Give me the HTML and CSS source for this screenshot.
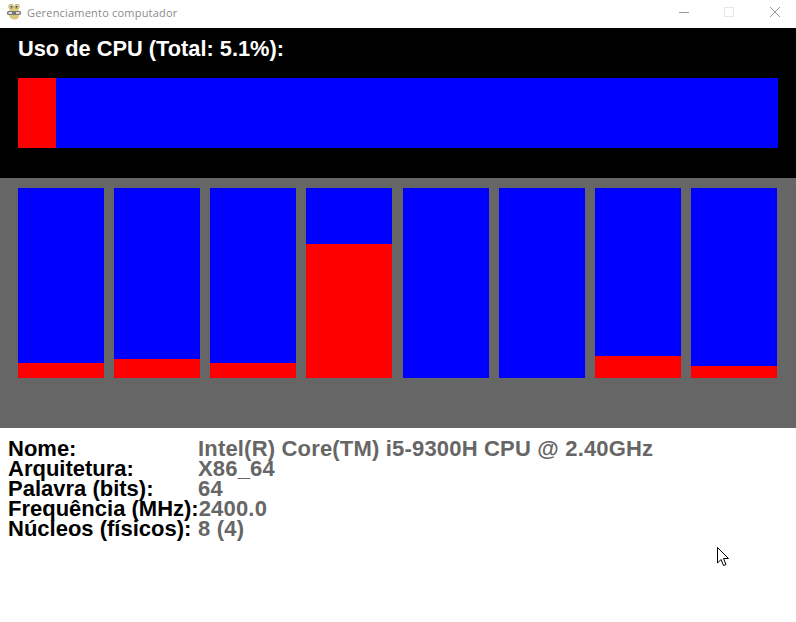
FILE: index.html
```html
<!DOCTYPE html>
<html lang="pt">
  <head>
    <meta charset="UTF-8" />
    <title>Gerenciamento computador</title>
    <link rel="stylesheet" href="styles.css">
  </head>
  <body>
    <div class="window">
      <div class="titlebar">
        <svg class="app-icon" width="14" height="16" viewBox="0 0 14 16">
          <path d="M3 8C1 10 2 15 7 15.500s6-4 4.500-7.500z" fill="#d9c77a"/>
          <path d="M3 3h8l1 5H2z" fill="#e3d07e"/>
          <circle cx="4" cy="2.500" r="2.300" fill="#efe09a" stroke="#8d8250" stroke-width=".6"/>
          <circle cx="10" cy="2.500" r="2.300" fill="#efe09a" stroke="#8d8250" stroke-width=".6"/>
          <circle cx="4.400" cy="2.800" r="1" fill="#444"/>
          <circle cx="9.600" cy="2.800" r="1" fill="#444"/>
          <rect x="0" y="7" width="14" height="4" rx="1.500" fill="#77777a"/>
          <rect x="1.500" y="8" width="3.500" height="2" fill="#dddddd"/>
          <rect x="9" y="8" width="3.500" height="2" fill="#dddddd"/>
        </svg>
        <span class="title">Gerenciamento computador</span>
        <div class="controls">
          <svg class="control-min" width="10" height="10" viewBox="0 0 10 10"><path d="M0 5.500h10" stroke="#999" fill="none"/></svg>
          <svg width="10" height="10" viewBox="0 0 10 10"><rect x=".5" y=".5" width="9" height="9" stroke="#e8e8e8" fill="none"/></svg>
          <svg width="10" height="10" viewBox="0 0 10 10"><path d="M0 0l10 10M10 0L0 10" stroke="#999" fill="none"/></svg>
        </div>
      </div>

      <!-- uso total -->
      <section class="total">
        <h1>Uso de CPU (Total: 5.1%):</h1>
        <div class="total-bar"><div class="total-used" style="width: 5%"></div></div>
      </section>

      <!-- uso por nucleo -->
      <section class="cores">
        <div class="core"><div class="core-used" style="height: 15px"></div></div>
        <div class="core"><div class="core-used" style="height: 19px"></div></div>
        <div class="core"><div class="core-used" style="height: 15px"></div></div>
        <div class="core"><div class="core-used" style="height: 134px"></div></div>
        <div class="core"><div class="core-used" style="height: 0"></div></div>
        <div class="core"><div class="core-used" style="height: 0"></div></div>
        <div class="core"><div class="core-used" style="height: 22px"></div></div>
        <div class="core"><div class="core-used" style="height: 12px"></div></div>
      </section>

      <section class="info">
        <div class="row"><span class="label">Nome:</span><span class="value">Intel(R) Core(TM) i5-9300H CPU @ 2.40GHz</span></div>
        <div class="row"><span class="label">Arquitetura:</span><span class="value">X86_64</span></div>
        <div class="row"><span class="label">Palavra (bits):</span><span class="value">64</span></div>
        <div class="row"><span class="label">Frequência (MHz):</span><span class="value">2400.0</span></div>
        <div class="row"><span class="label">Núcleos (físicos):</span><span class="value">8 (4)</span></div>
      </section>

      <svg class="cursor" width="12" height="20" viewBox="0 0 12 20">
        <path d="M.5.500v15.500l3.500-3.500 2.500 6 2.500-1-2.500-6h5z" fill="#fff" stroke="#000" stroke-width="1"/>
      </svg>
    </div>
  </body>
</html>
```

FILE: styles.css
```css
html,
body {
  margin: 0;
  padding: 0;
  background: #fff;
}
.window {
  position: relative;
  width: 796px;
  height: 622px;
  overflow: hidden;
  font-family: "Liberation Sans", Arial, sans-serif;
}
.titlebar {
  display: flex;
  align-items: center;
  height: 28px;
  padding: 0 0 4px 7px;
  box-sizing: border-box;
  background: #fff;
}
.app-icon {
  margin-right: 6px;
}
.title {
  font-family: "Open Sans", "Noto Sans", sans-serif;
  font-size: 11px;
  letter-spacing: 0.2px;
  color: #8a8a8a;
}
.controls {
  display: flex;
  gap: 36px;
  margin-left: auto;
  padding-right: 16px;
}
.control-min {
  margin-right: -1px;
}
.total {
  height: 150px;
  padding: 0 18px;
  box-sizing: border-box;
  background: #000;
}
.total h1 {
  margin: 0;
  padding-top: 8px;
  height: 50px;
  box-sizing: border-box;
  font-size: 21.8px;
  line-height: 25px;
  font-weight: bold;
  color: #fff;
}
.total-bar {
  height: 70px;
  background: #00f;
}
.total-used {
  height: 100%;
  background: #f00;
}
.cores {
  display: grid;
  grid-template-columns: repeat(8, 86px);
  justify-content: space-between;
  height: 250px;
  padding: 10px 19px 50px 18px;
  box-sizing: border-box;
  background: #666;
}
.core {
  display: flex;
  flex-direction: column;
  justify-content: flex-end;
  background: #00f;
}
.core-used {
  background: #f00;
}
.info {
  padding: 11px 0 0 8px;
}
.row {
  display: flex;
  height: 20px;
  font-size: 22px;
  line-height: 20px;
  font-weight: bold;
}
.label {
  flex: 0 0 190px;
  color: #000;
  white-space: nowrap;
}
.value {
  color: #666;
  letter-spacing: 0.18px;
  white-space: nowrap;
}
.cursor {
  position: absolute;
  left: 717px;
  top: 547px;
}
```
